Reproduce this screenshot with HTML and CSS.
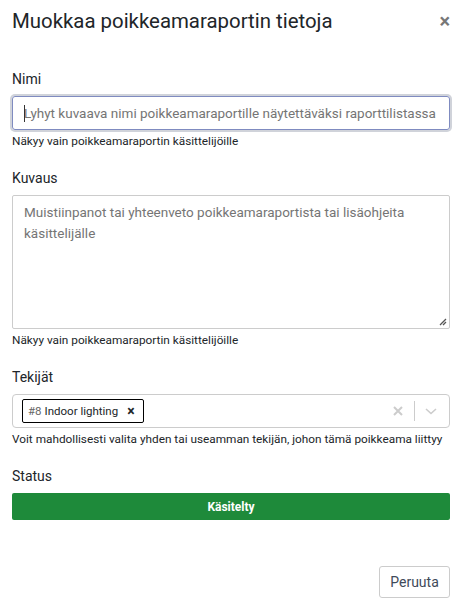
FILE: index.html
```html
<!DOCTYPE html>
<html lang="fi">
<head>
<meta charset="utf-8">
<link rel="stylesheet" href="styles.css">
</head>
<body>
<div class="modal">
  <div class="header">
    <h1 class="title">Muokkaa poikkeamaraportin tietoja</h1>
    <span class="close">×</span>
  </div>
  <div class="body">
    <div class="field">
      <label class="label">Nimi</label>
      <div class="input focus"><span class="caret"></span><span class="ph">Lyhyt kuvaava nimi poikkeamaraportille näytettäväksi raporttilistassa</span></div>
      <div class="help">Näkyy vain poikkeamaraportin käsittelijöille</div>
    </div>
    <div class="field">
      <label class="label">Kuvaus</label>
      <div class="textarea"><span class="ph">Muistiinpanot tai yhteenveto poikkeamaraportista tai lisäohjeita käsittelijälle</span>
        <svg class="grip" width="8" height="8" viewBox="0 0 8 8"><path d="M7 1L1 7M7 4L4 7" stroke="#555" stroke-width="1.3"/></svg>
      </div>
      <div class="help">Näkyy vain poikkeamaraportin käsittelijöille</div>
    </div>
    <div class="field">
      <label class="label">Tekijät</label>
      <div class="select">
        <div class="values">
          <span class="chip"><span class="num">#8</span> Indoor lighting <span class="chip-x">×</span></span>
        </div>
        <div class="indicators">
          <svg width="20" height="20" viewBox="0 0 20 20"><path d="M6 6L14 14M14 6L6 14" stroke="#ccc" stroke-width="2"/></svg>
          <span class="sep"></span>
          <svg width="20" height="20" viewBox="0 0 20 20"><path d="M5 8L10 12.5L15 8" stroke="#ccc" stroke-width="1.6" fill="none"/></svg>
        </div>
      </div>
      <div class="help">Voit mahdollisesti valita yhden tai useamman tekijän, johon tämä poikkeama liittyy</div>
    </div>
    <div class="field">
      <label class="label">Status</label>
      <div class="status">Käsitelty</div>
    </div>
  </div>
  <div class="footer">
    <button class="btn">Peruuta</button>
  </div>
</div>
</body>
</html>
```
FILE: styles.css
```css
* { box-sizing: border-box; }
html, body { margin: 0; padding: 0; background: #fff; }
body { font-family: Roboto, "Liberation Sans", sans-serif; color: #212529; }
.modal { width: 464px; padding: 0 14px 0 12px; }
.header { display: flex; justify-content: space-between; align-items: center; height: 40px; padding-top: 1px; }
.title { margin: 0; font-size: 20.4px; font-weight: 400; color: #212529; }
.close { font-size: 20px; font-weight: 700; color: #777; margin-right: 0; line-height: 1; }
.body { padding-top: 30px; }
.label { display: block; font-size: 14px; line-height: 18px; margin-bottom: 8px; }
.input { height: 34px; border: 1px solid #7f8bc0; border-radius: 3px; box-shadow: 0 0 0 2px #d0d3da; display: flex; align-items: center; padding-left: 11px; font-size: 13.5px; position: relative; }
.caret { width: 1px; height: 17px; background: #333; position: absolute; left: 11px; top: 8px; }
.ph { color: #757575; white-space: nowrap; }
.help { font-size: 11.8px; line-height: 16px; margin-top: 3px; margin-bottom: 20px; color: #212529; }
.textarea { height: 134px; border: 1px solid #ccc; border-radius: 2px; padding: 6px 11px; font-size: 13.5px; line-height: 21px; position: relative; }
.textarea .ph { white-space: normal; }
.grip { position: absolute; right: 2px; bottom: 2px; }
.select { height: 34px; border: 1px solid #ccc; border-radius: 4px; display: flex; align-items: center; justify-content: space-between; padding-left: 9px; }
.chip { display: inline-flex; align-items: center; height: 24px; border: 1px solid #000; border-radius: 2px; padding: 0 8px 0 5px; font-size: 11.5px; color: #212529; }
.chip .num { color: #666; margin-right: 3px; }
.chip-x { font-size: 14px; font-weight: 700; margin-left: 9px; }
.indicators { display: flex; align-items: center; padding-right: 4px; }
.indicators svg { display: block; margin: 0 4px; }
.sep { width: 1px; height: 20px; background: #ccc; margin: 0 2px; }
.status { height: 27px; background: #1e8a3a; color: #fff; font-weight: 700; font-size: 12px; display: flex; align-items: center; justify-content: center; border-radius: 2px; }
.footer { display: flex; justify-content: flex-end; padding-top: 46px; }
.btn { font-family: Roboto, "Liberation Sans", sans-serif; font-size: 14px; color: #3f4a5a; background: #fff; border: 1px solid #ccc; border-radius: 3px; height: 32px; width: 71px; padding: 0; }
```
